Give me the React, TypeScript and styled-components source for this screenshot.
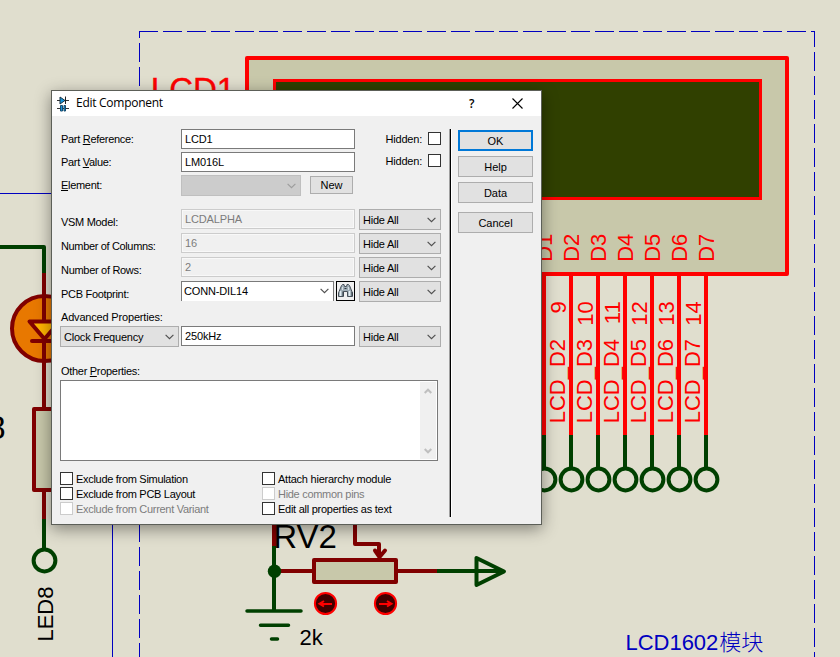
import React from "react";
import styled, { createGlobalStyle } from "styled-components";

const GlobalStyle = createGlobalStyle`
  html, body { margin: 0; padding: 0; overflow: hidden; }
  body { background: #e0dece; }
  * { box-sizing: border-box; }
`;

const RED = "#ff0000";
const MAROON = "#800000";
const GREEN = "#004000";
const BLUE = "#0000c0";
const BODY = "#c8c8aa";

const Desktop = styled.main`
  position: relative;
  width: 840px;
  height: 657px;
  overflow: hidden;
  background: #e0dece;
  font-family: "Liberation Sans", Arial, sans-serif;
`;

const Canvas = styled.svg`
  display: block;
  font-family: "Liberation Sans", Arial, "Noto Sans CJK SC", sans-serif;
`;

const Dialog = styled.section`
  position: absolute;
  left: 51px;
  top: 90px;
  width: 491px;
  height: 435px;
  display: flex;
  flex-direction: column;
  background: #f0f0f0;
  border: 1px solid #5c5f58;
  box-shadow: 0 4px 15px rgba(0, 0, 0, 0.42);
  font-size: 11px;
  line-height: 13px;
  color: #000;
  white-space: nowrap;
`;

const TitleBar = styled.header`
  display: flex;
  align-items: center;
  flex: 0 0 25px;
  padding: 0 18px 0 4px;
  background: #fff;
`;

const Title = styled.h1`
  flex: 1;
  margin: 0 0 1px 6px;
  font: 400 12px/16px "Open Sans", "Noto Sans", sans-serif;
  letter-spacing: -0.27px;
`;

const HelpMark = styled.span`
  width: 8px;
  margin-right: 35px;
  font: 600 12px/16px "Open Sans", "Noto Sans", sans-serif;
`;

const Body = styled.div`
  display: flex;
  flex: 1;
  padding: 13px 8px 7px;
`;

const Form = styled.div`
  width: 381px;
`;

const Separator = styled.div`
  width: 3px;
  height: 388px;
  margin: 0 6px 0 8px;
  background: #000;
  border-left: 1px solid #a0a0a0;
  border-right: 1px solid #fff;
`;

const Actions = styled.div`
  display: flex;
  flex-direction: column;
  gap: 5px;
  width: 75px;
  padding-top: 1px;
`;

const Button = styled.button<{ $primary?: boolean; $gap?: number; $small?: boolean }>`
  width: ${(p) => (p.$small ? 43 : 75)}px;
  height: ${(p) => (p.$small ? 18 : 21)}px;
  margin: ${(p) => p.$gap || 0}px 0 0;
  padding: ${(p) => (p.$small ? 0 : 2)}px 0 0;
  border: ${(p) => (p.$primary ? "2px solid #0078d7" : "1px solid #adadad")};
  background: #e1e1e1;
  color: #000;
  font: 11px/13px "Liberation Sans", Arial, sans-serif;
`;

const Row = styled.div<{ $height: number }>`
  display: grid;
  grid-template-columns: 121px 178px 82px;
  align-items: start;
  height: ${(p) => p.$height}px;
`;

const Label = styled.label<{ $top: number; $spacing?: number }>`
  display: block;
  padding: ${(p) => p.$top}px 0 0 1px;
  letter-spacing: ${(p) => p.$spacing ?? -0.3}px;
`;

const Key = styled.span`
  text-decoration: underline;
  text-underline-offset: 1px;
  text-decoration-thickness: 1px;
`;

const Field = styled.div<{ $disabled?: boolean }>`
  width: 174px;
  height: 20px;
  padding: 3px 0 0 3px;
  border: 1px solid ${(p) => (p.$disabled ? "#cccccc" : "#7a7a7a")};
  box-shadow: ${(p) => (p.$disabled ? "inset 0 0 0 1px #f8f8f8" : "none")};
  background: ${(p) => (p.$disabled ? "#f0f0f0" : "#fff")};
  color: ${(p) => (p.$disabled ? "#7c7c7c" : "#000")};
  letter-spacing: -0.15px;
`;

const Select = styled.div<{ $width: number; $kind?: "disabled" | "editable" }>`
  display: flex;
  justify-content: space-between;
  align-items: flex-start;
  width: ${(p) => p.$width}px;
  height: ${(p) => (p.$kind === "editable" ? 20 : 21)}px;
  padding: ${(p) => (p.$kind === "editable" ? 3 : 4)}px 4px 0 ${(p) => (p.$kind === "editable" ? 2 : 3)}px;
  border: 1px solid ${(p) => (p.$kind === "editable" ? "#7a7a7a" : p.$kind === "disabled" ? "#bfbfbf" : "#adadad")};
  border-bottom-width: ${(p) => (p.$kind === "editable" ? 0 : 1)}px;
  background: ${(p) => (p.$kind === "editable" ? "#fff" : p.$kind === "disabled" ? "#cccccc" : "#e1e1e1")};
  letter-spacing: ${(p) => (p.$kind === "editable" ? -0.15 : -0.22)}px;
`;

const Chevron = styled.svg`
  width: 9px;
  height: 6px;
  margin-top: 3px;
`;

const Cell = styled.div<{ $gap?: number }>`
  display: flex;
  gap: ${(p) => p.$gap || 0}px;
  align-items: flex-start;
`;

const FindButton = styled.button`
  width: 19px;
  height: 20px;
  padding: 0;
  border: 1px solid #000;
  background: #f0f0f0;
  svg { display: block; }
`;

const HiddenToggle = styled.div<{ $top: number }>`
  display: flex;
  justify-content: flex-end;
  gap: 6px;
  padding-top: ${(p) => p.$top}px;
  letter-spacing: -0.2px;
  span:first-child { padding-top: 1px; }
`;

const Box = styled.span<{ $disabled?: boolean }>`
  flex: 0 0 13px;
  width: 13px;
  height: 13px;
  background: #fff;
  border: 1px solid ${(p) => (p.$disabled ? "#cccccc" : "#333")};
`;

const Memo = styled.div`
  display: flex;
  justify-content: flex-end;
  width: 378px;
  height: 81px;
  padding: 1px;
  border: 1px solid #7a7a7a;
  background: #fff;
`;

const ScrollTrack = styled.div`
  display: flex;
  flex-direction: column;
  justify-content: space-between;
  align-items: center;
  width: 16px;
  padding: 6px 0 5px;
  background: #f0f0f0;
`;

const Options = styled.div`
  display: grid;
  grid-template-columns: 202px 1fr;
  grid-auto-rows: 15px;
  margin-top: 11px;
`;

const Option = styled.div<{ $disabled?: boolean; $spacing?: number }>`
  display: flex;
  gap: 3px;
  color: ${(p) => (p.$disabled ? "#7c7c7c" : "#000")};
  letter-spacing: ${(p) => p.$spacing ?? -0.3}px;
  span + span { padding-top: 1px; }
`;

function Down({ color = "#505050" }: { color?: string }) {
  return (
    <Chevron viewBox="0 0 9 6">
      <path d="M.6 .8L4.5 4.7L8.4 .8" fill="none" stroke={color} strokeWidth="1.15" />
    </Chevron>
  );
}

function Combo({ text, width = 82 }: { text: string; width?: number }) {
  return (
    <Select $width={width}>
      <span>{text}</span>
      <Down />
    </Select>
  );
}

function Hidden({ top }: { top: number }) {
  return (
    <HiddenToggle $top={top}>
      <span>Hidden:</span>
      <Box />
    </HiddenToggle>
  );
}

function Check({ text, disabled, spacing }: { text: string; disabled?: boolean; spacing?: number }) {
  return (
    <Option $disabled={disabled} $spacing={spacing}>
      <Box $disabled={disabled} />
      <span>{text}</span>
    </Option>
  );
}

const pins = [
  { x: 544, pin: "8", data: "D1" },
  { x: 571, pin: "9", data: "D2" },
  { x: 598, pin: "10", data: "D3" },
  { x: 625, pin: "11", data: "D4" },
  { x: 652, pin: "12", data: "D5" },
  { x: 679, pin: "13", data: "D6" },
  { x: 706, pin: "14", data: "D7" },
];

function Upright({ x, y, text, fill, end }: { x: number; y: number; text: string; fill: string; end?: boolean }) {
  return (
    <text transform={`translate(${x} ${y}) rotate(-90)`} fontSize="22" fill={fill} textAnchor={end ? "end" : "start"}>
      {text}
    </text>
  );
}

function Schematic() {
  return (
    <Canvas width="840" height="657" viewBox="0 0 840 657">
      <g stroke={BLUE} fill="none">
        <path d="M0 193.5H52M112.5 520V657" />
        <path d="M139 31.5H815" strokeDasharray="19 5" />
        <path d="M139.500 31V657" strokeDasharray="19 5" strokeDashoffset="12" />
        <path d="M814.500 31V657" strokeDasharray="19 5" strokeDashoffset="3" />
      </g>

      <rect x="247" y="58" width="540" height="216" fill={BODY} stroke={RED} strokeWidth="4" strokeLinejoin="round" />
      <rect x="274.500" y="80.500" width="486" height="118" fill="#304000" stroke={RED} strokeWidth="3" />
      <text x="150.800" y="101" fontSize="33" fill={RED} stroke={RED} strokeWidth=".4">LCD1</text>

      {pins.map(({ x, pin, data }) => (
        <g key={data}>
          <path d={`M${x} 276V436`} stroke={RED} strokeWidth="4" />
          <path d={`M${x} 435V468`} stroke={GREEN} strokeWidth="4" />
          <circle cx={x + 0.5} cy="479.500" r="10.900" fill="none" stroke={GREEN} strokeWidth="4" />
          <Upright x={x + 8.2} y={261.8} text={data} fill={RED} />
          {data !== "D1" && <Upright x={x - 4.6} y={301.3} text={pin} fill={RED} end />}
          {data !== "D1" && <Upright x={x - 6.2} y={423.3} text={`LCD_${data}`} fill={RED} />}
        </g>
      ))}

      <g fill="none" strokeWidth="4" strokeLinejoin="round">
        <path d="M0 247H44V274" stroke={GREEN} />
        <circle cx="44.500" cy="328.500" r="32.500" fill="#e87800" stroke={MAROON} />
        <path d="M44 273V320M44 339V409" stroke={MAROON} />
        <path d="M29.500 321.500H59.500L44.500 339Z" fill="#ffb400" stroke={MAROON} />
        <path d="M32 341H58" stroke={MAROON} strokeLinecap="round" />
        <rect x="34" y="409" width="20" height="81" fill={BODY} stroke={MAROON} />
        <path d="M44 492V519" stroke={MAROON} />
        <path d="M44 519V549" stroke={GREEN} />
        <circle cx="44.500" cy="560.500" r="10.900" stroke={GREEN} />
      </g>
      <text x="-12.800" y="438.500" fontSize="33">8</text>
      <Upright x={52.5} y={641.6} text="LED8" fill="#000" />

      <g fill="none" strokeWidth="4" strokeLinejoin="round">
        <path d="M274 520V546M280 571H313M398 571H438" stroke={MAROON} />
        <path d="M274 546V611M437 571H503" stroke={GREEN} />
        <circle cx="274.500" cy="571.300" r="6.700" fill={GREEN} stroke="none" />
        <path d="M247 611H301M260.500 625.200H288.500M271.500 639H277.500" stroke={GREEN} strokeLinecap="round" strokeWidth="3.500" />
        <path d="M476.500 558V585L504 571.500Z" stroke={GREEN} />
        <path d="M355 520V544H379V557" stroke={MAROON} />
        <path d="M375 550.500L379.500 557L385 550.500" stroke={MAROON} strokeLinecap="round" />
        <rect x="314" y="560" width="82" height="22" fill={BODY} stroke={MAROON} />
      </g>
      <text x="273.200" y="548" fontSize="33">RV2</text>
      <text x="299.500" y="644.500" fontSize="22">2k</text>
      {[325.5, 385.5].map((cx, i) => (
        <g key={cx} transform={`translate(${cx} 603.500)${i === 0 ? " scale(-1 1)" : ""}`} fill="none" stroke={RED}>
          <circle r="10.600" fill="#400000" strokeWidth="2" />
          <path d="M-6.500 .5H5M1.500-2.500L6 .3L1.500 3" strokeWidth="2" />
        </g>
      ))}
      <text x="625.400" y="650" fontSize="22" fill={BLUE}>
        LCD1602<tspan dx=".8" fontFamily="Noto Sans CJK SC" fontWeight="300">模块</tspan>
      </text>
    </Canvas>
  );
}

function ComponentIcon() {
  return (
    <svg width="14" height="18" viewBox="0 0 14 18">
      <path d="M1 5.500H13M1 13.500H13" stroke="#333" />
      <path d="M4 2L9 5.500L4 9Z" fill="#1595dc" stroke="#17303f" />
      <path d="M9.500 1.500V9" stroke="#222" />
      <path d="M4.500 10.500H6.500V16H4.500ZM8 10.500H9.500V16H8Z" fill="#1595dc" stroke="#174a6c" />
    </svg>
  );
}

function Binoculars() {
  return (
    <svg width="17" height="18" viewBox="0 0 17 18">
      <path d="M4.500 3.500L5.500 2.500H7L7.500 4.500L9.500 4.500L10 2.500H11.500L12.500 3.500L15.500 11V14.500H10.500V9.500H6.500V14.500H1.500V11Z" fill="#9eacb5" stroke="#48515a" />
      <path d="M3.500 9V14M12.500 9V14" stroke="#e3edf3" strokeWidth="1.500" />
      <path d="M5.500 5V8M11.500 5V8" stroke="#d5dde2" />
      <path d="M7.500 6.500H9.500M6 9.500V14M15 10V14" stroke="#303a42" />
    </svg>
  );
}

export default function App() {
  return (
    <Desktop>
      <GlobalStyle />
      <Schematic />
      <Dialog>
        <TitleBar>
          <ComponentIcon />
          <Title>Edit Component</Title>
          <HelpMark>?</HelpMark>
          <svg width="11" height="11" viewBox="0 0 11 11">
            <path d="M.5 .5L10.500 10.500M10.500 .5L.5 10.500" stroke="#000" strokeWidth="1.100" />
          </svg>
        </TitleBar>
        <Body>
          <Form>
            <Row $height={23}>
              <Label $top={4}>Part <Key>R</Key>eference:</Label>
              <Field>LCD1</Field>
              <Hidden top={3} />
            </Row>
            <Row $height={23}>
              <Label $top={4}>Part <Key>V</Key>alue:</Label>
              <Field>LM016L</Field>
              <Hidden top={2} />
            </Row>
            <Row $height={34}>
              <Label $top={4}><Key>E</Key>lement:</Label>
              <Cell $gap={9}>
                <Select $width={120} $kind="disabled"><span /><Down color="#9d9d9d" /></Select>
                <Button $small $gap={1}>New</Button>
              </Cell>
            </Row>
            <Row $height={24}>
              <Label $top={7}>VSM Model:</Label>
              <Field $disabled>LCDALPHA</Field>
              <Combo text="Hide All" />
            </Row>
            <Row $height={24}>
              <Label $top={7} $spacing={-0.35}>Number of Columns:</Label>
              <Field $disabled>16</Field>
              <Combo text="Hide All" />
            </Row>
            <Row $height={24}>
              <Label $top={7}>Number of Rows:</Label>
              <Field $disabled>2</Field>
              <Combo text="Hide All" />
            </Row>
            <Row $height={24}>
              <Label $top={7}>PCB Footprint:</Label>
              <Cell $gap={2}>
                <Select $width={153} $kind="editable"><span>CONN-DIL14</span><Down /></Select>
                <FindButton><Binoculars /></FindButton>
              </Cell>
              <Combo text="Hide All" />
            </Row>
            <Row $height={21}>
              <Label $top={6} $spacing={-0.18}>Advanced Properties:</Label>
            </Row>
            <Row $height={21}>
              <Combo text="Clock Frequency" width={119} />
              <Field>250kHz</Field>
              <Combo text="Hide All" />
            </Row>
            <Row $height={33}>
              <Label $top={18}>Other <Key>P</Key>roperties:</Label>
            </Row>
            <Memo>
              <ScrollTrack>
                <svg width="8" height="6" viewBox="0 0 8 6"><path d="M.7 5L4 1.700L7.300 5" fill="none" stroke="#bfbfbf" strokeWidth="2" /></svg>
                <svg width="8" height="6" viewBox="0 0 8 6"><path d="M.7 1L4 4.300L7.300 1" fill="none" stroke="#bfbfbf" strokeWidth="2" /></svg>
              </ScrollTrack>
            </Memo>
            <Options>
              <Check text="Exclude from Simulation" />
              <Check text="Attach hierarchy module" spacing={-0.24} />
              <Check text="Exclude from PCB Layout" />
              <Check text="Hide common pins" disabled />
              <Check text="Exclude from Current Variant" disabled />
              <Check text="Edit all properties as text" spacing={-0.26} />
            </Options>
          </Form>
          <Separator />
          <Actions>
            <Button $primary>OK</Button>
            <Button>Help</Button>
            <Button>Data</Button>
            <Button $gap={4}>Cancel</Button>
          </Actions>
        </Body>
      </Dialog>
    </Desktop>
  );
}
